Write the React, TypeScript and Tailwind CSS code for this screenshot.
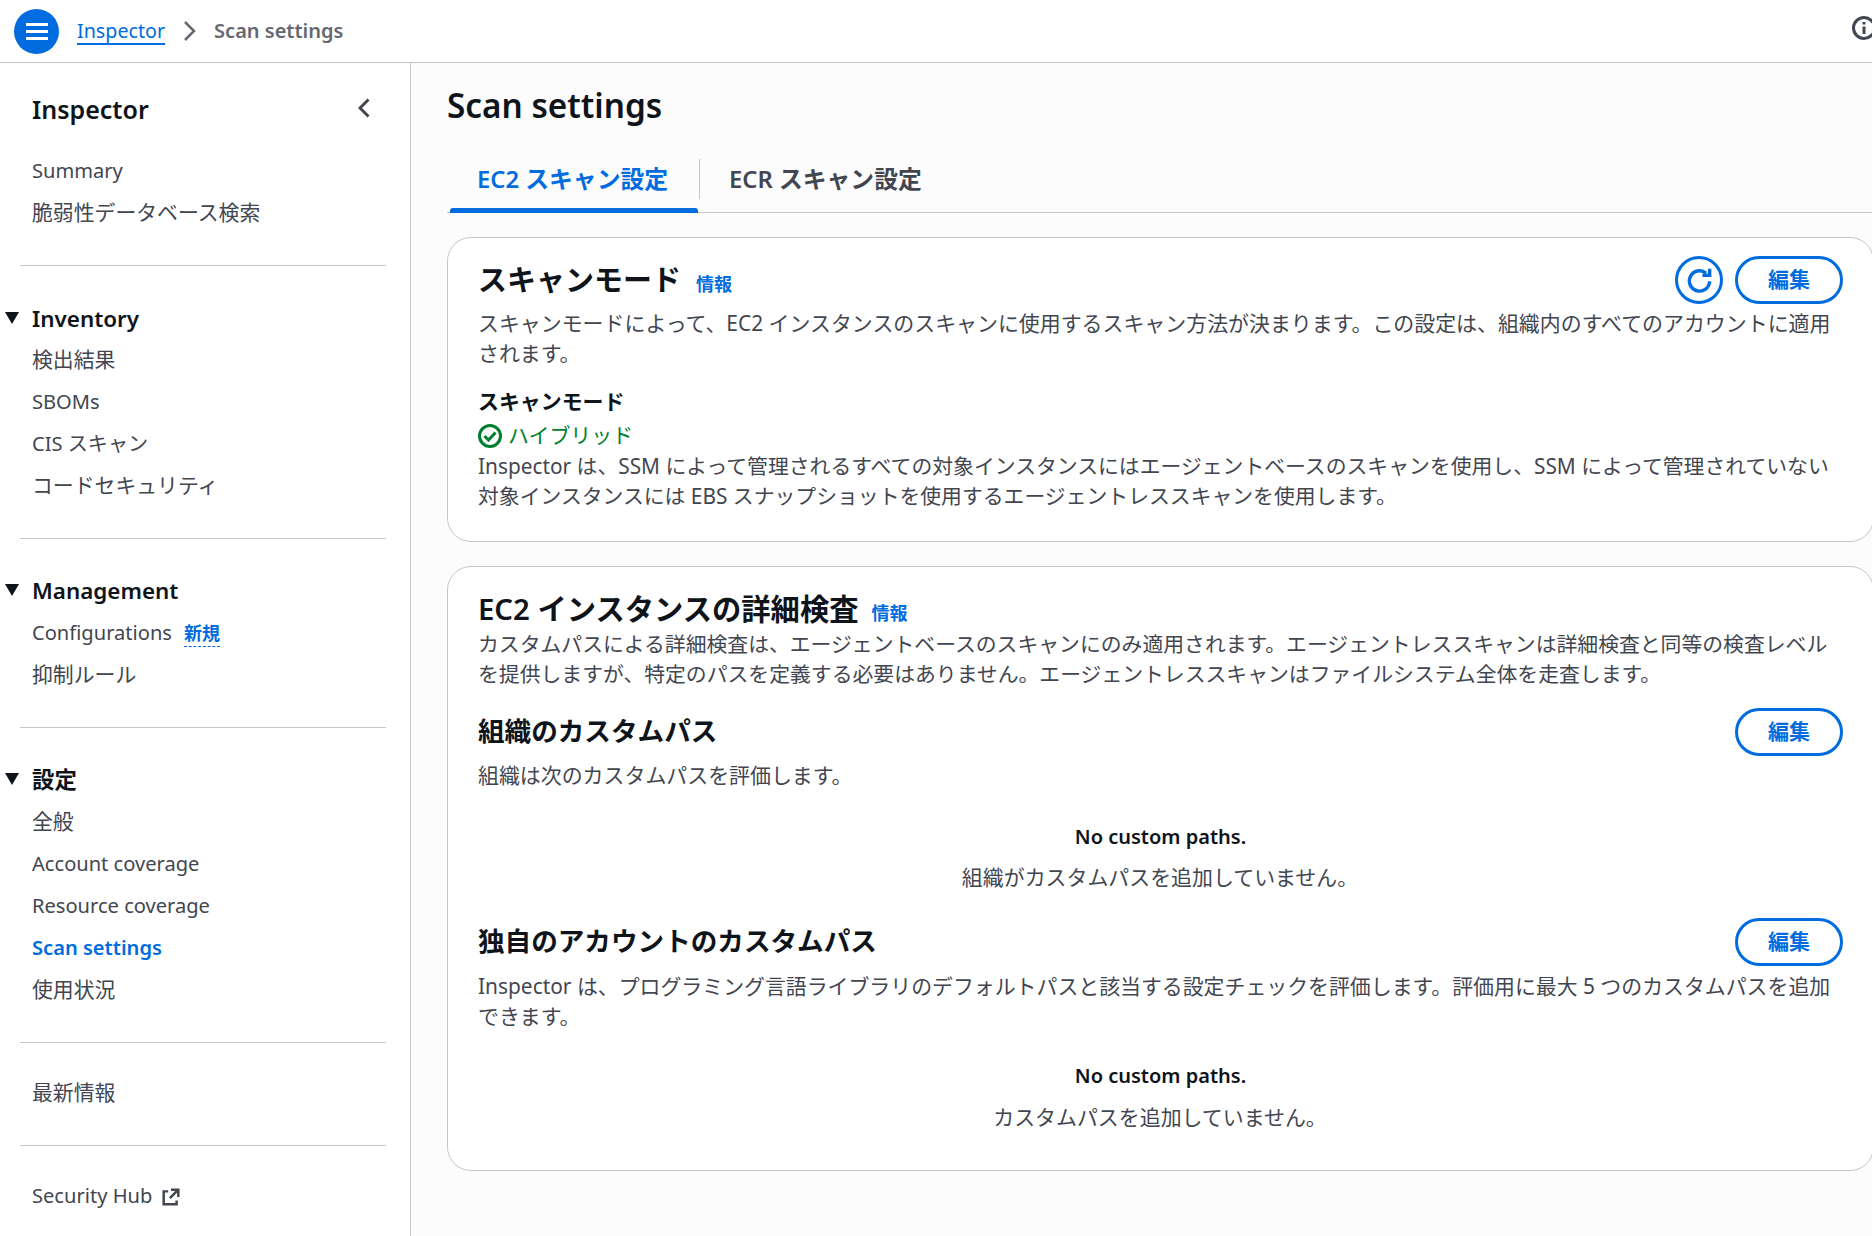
const FONT = "font-['Noto_Sans','Noto_Sans_CJK_JP',sans-serif]";

function Tri() {
  return (
    <svg viewBox="0 0 14 12" className="absolute left-[5px] top-[13px] w-[14px] h-[12px]">
      <path d="M0 0h14L7 12z" fill="#0f141a" />
    </svg>
  );
}

function NavItem({ children, active, latin, className = "" }: { children: React.ReactNode; active?: boolean; latin?: boolean; className?: string }) {
  return (
    <div className={`h-[42px] flex items-center pl-8 ${latin ? "text-[20.1px] pt-[1px]" : "text-[20.85px]"} ${active ? "text-[#006ce0] font-semibold" : "text-[#424650]"} ${className}`}>
      {children}
    </div>
  );
}

function NavHead({ children }: { children: React.ReactNode }) {
  return (
    <div className="relative h-[41px] flex items-center pl-8 pb-[2px] text-[22.4px] font-semibold text-[#0f141a]">
      <Tri />
      {children}
    </div>
  );
}

function Divider({ className = "" }: { className?: string }) {
  return <div className={`h-px ml-5 w-[366px] bg-[#c6c6cd] ${className}`} />;
}

function Sidebar() {
  return (
    <aside className="w-[411px] shrink-0 bg-white border-r border-[#c6c6cd] h-full">
      <div className="flex items-center justify-between pl-8 pr-[40px] h-[30px] mt-[32px]">
        <span className="text-[25px] font-semibold text-[#0f141a]">Inspector</span>
        <svg viewBox="0 0 12 20" className="w-[12px] h-[20px] -mt-[4px]" fill="none" stroke="#424650" strokeWidth="3">
          <path d="M10.5 1.5 2 10l8.5 8.5" />
        </svg>
      </div>
      <div className="mt-[25px]">
        <NavItem latin>Summary</NavItem>
        <NavItem>脆弱性データベース検索</NavItem>
      </div>
      <Divider className="mt-[31px] mb-[33px]" />
      <NavHead>Inventory</NavHead>
      <NavItem className="-mt-[1px]">検出結果</NavItem>
      <NavItem latin>SBOMs</NavItem>
      <NavItem latin>CIS スキャン</NavItem>
      <NavItem>コードセキュリティ</NavItem>
      <Divider className="mt-[31px] mb-[32px]" />
      <NavHead>Management</NavHead>
      <NavItem latin>
        Configurations
        <span className="ml-[12px] text-[18px] font-semibold text-[#006ce0] border-b border-dashed border-[#006ce0] leading-[26px]">新規</span>
      </NavItem>
      <NavItem>抑制ルール</NavItem>
      <Divider className="mt-[31px] mb-[32px]" />
      <NavHead>設定</NavHead>
      <NavItem>全般</NavItem>
      <NavItem latin>Account coverage</NavItem>
      <NavItem latin>Resource coverage</NavItem>
      <NavItem latin active>Scan settings</NavItem>
      <NavItem>使用状況</NavItem>
      <Divider className="mt-[31px] mb-[29px]" />
      <NavItem>最新情報</NavItem>
      <Divider className="mt-[31px] mb-[29px]" />
      <NavItem latin>
        Security Hub
        <svg viewBox="0 0 16 16" className="ml-[10px] w-[18px] h-[18px]" fill="none" stroke="#424650" strokeWidth="2.2">
          <path d="M14.5 8V1.5H8M14.5 1.5 7 9M5.5 3H1.5v11.5H13v-3.5" />
        </svg>
      </NavItem>
    </aside>
  );
}

function EditButton() {
  return (
    <button className="w-[108px] h-[48px] rounded-full border-[3px] border-[#006ce0] bg-white text-[#006ce0] text-[21px] font-semibold flex items-center justify-center">
      編集
    </button>
  );
}

function Empty({ sub, gapClass }: { sub: string; gapClass: string }) {
  return (
    <div className="text-center">
      <div className="leading-[30px] font-semibold text-[20px] text-[#0f141a]">No custom paths.</div>
      <div className={`leading-[30px] text-[#424650] -ml-[1px] ${gapClass}`}>{sub}</div>
    </div>
  );
}

function App() {
  return (
    <div className={`${FONT} w-[1872px] h-[1236px] overflow-hidden flex flex-col bg-[#fcfcfd] text-[20.93px]`} lang="ja">
      <header className="h-[63px] shrink-0 bg-white border-b border-[#c6c6cd] flex items-center pl-[14px] pr-0 relative">
        <button className="w-[45px] h-[45px] rounded-full bg-[#006ce0] flex items-center justify-center">
          <svg viewBox="0 0 22 17" className="w-[22px] h-[17px]" fill="#fff">
            <path d="M0 0h22v3H0zM0 7h22v3H0zM0 14h22v3H0z" />
          </svg>
        </button>
        <a className="ml-[18px] text-[#006ce0] underline underline-offset-[5px] decoration-2 text-[19.7px]">Inspector</a>
        <svg viewBox="0 0 13 20" className="ml-[18px] w-[13px] h-[20px]" fill="none" stroke="#656871" strokeWidth="2.5">
          <path d="M2 1l9 9-9 9" />
        </svg>
        <span className="ml-[18px] text-[#656871] font-semibold text-[20px]">Scan settings</span>
        <svg viewBox="0 0 24 24" className="absolute left-[1852px] top-[16px] w-[24px] h-[24px]" fill="none" stroke="#424650" strokeWidth="3">
          <circle cx="12" cy="12" r="10.5" />
          <path d="M12 10.5V18M12 6v2.5" />
        </svg>
      </header>
      <div className="flex-1 flex min-h-0">
        <Sidebar />
        <main className="w-[1463px] shrink-0 pl-[36px]">
          <h1 className="text-[33.3px] leading-[44px] mt-[20px] font-semibold text-[#0f141a] whitespace-nowrap">Scan settings</h1>
          <div className="mt-[31px] h-[55px] border-b border-[#c6c6cd] flex">
            <div className="relative w-[253px] h-[55px] flex items-start">
              <div className="ml-[30px] text-[23.8px] leading-[32px] mt-[5px] font-semibold text-[#006ce0] whitespace-nowrap">EC2 スキャン設定</div>
              <div className="absolute left-[3px] bottom-[0px] w-[248px] h-[5px] rounded-t-[3px] bg-[#006ce0]" />
              <div className="absolute left-[252px] top-[1px] w-px h-[40px] bg-[#c6c6cd]" />
            </div>
            <div className="ml-[29px] text-[23.8px] leading-[32px] mt-[5px] font-semibold text-[#424650] whitespace-nowrap">ECR スキャン設定</div>
          </div>

          <section className="mt-[24px] h-[305px] bg-white border border-[#c6c6cd] rounded-[24px] pl-[30px] pr-[30px] pt-[18px]">
            <div className="flex items-center justify-between h-[48px]">
              <h2 className="text-[29px] font-semibold text-[#0f141a] flex items-baseline">
                スキャンモード
                <span className="ml-[15px] text-[18px] font-semibold text-[#006ce0]">情報</span>
              </h2>
              <div className="flex gap-[12px]">
                <button className="w-[48px] h-[48px] rounded-full border-[3px] border-[#006ce0] bg-white flex items-center justify-center">
                  <svg viewBox="0 0 16 16" className="w-[25px] h-[25px]" fill="none" stroke="#006ce0" strokeWidth="2.2">
                    <path d="M14.5 8.5a6.5 6.5 0 1 1-2.3-5.2" />
                    <path d="M14.5 .5V4.6h-4.6" />
                  </svg>
                </button>
                <EditButton />
              </div>
            </div>
            <p className="mt-[4px] leading-[30px] text-[#424650] whitespace-nowrap">
              スキャンモードによって、EC2 インスタンスのスキャンに使用するスキャン方法が決まります。この設定は、組織内のすべてのアカウントに適用
              <br />
              されます。
            </p>
            <div className="mt-[16px] leading-[34px] font-semibold text-[#0f141a]">スキャンモード</div>
            <div className="mt-[1px] flex items-center h-[34px] text-[#00802f]">
              <svg viewBox="0 0 24 24" className="w-[24px] h-[24px] mr-[6px]" fill="none" stroke="#00802f" strokeWidth="3">
                <circle cx="12" cy="12" r="10.5" />
                <path d="M6.5 12l4 4 7-7.5" />
              </svg>
              ハイブリッド
            </div>
            <p className="leading-[30px] text-[20.84px] text-[#424650] whitespace-nowrap -mt-[2px]">
              Inspector は、SSM によって管理されるすべての対象インスタンスにはエージェントベースのスキャンを使用し、SSM によって管理されていない
              <br />
              対象インスタンスには EBS スナップショットを使用するエージェントレススキャンを使用します。
            </p>
          </section>

          <section className="mt-[24px] h-[605px] bg-white border border-[#c6c6cd] rounded-[24px] pl-[30px] pr-[30px] pt-[22px]">
            <h2 className="text-[29.3px] leading-[40px] font-semibold text-[#0f141a] flex items-baseline">
              EC2 インスタンスの詳細検査
              <span className="ml-[13px] text-[18px] font-semibold text-[#006ce0]">情報</span>
            </h2>
            <p className="mt-[-4px] leading-[30px] text-[20.84px] text-[#424650] whitespace-nowrap">
              カスタムパスによる詳細検査は、エージェントベースのスキャンにのみ適用されます。エージェントレススキャンは詳細検査と同等の検査レベル
              <br />
              を提供しますが、特定のパスを定義する必要はありません。エージェントレススキャンはファイルシステム全体を走査します。
            </p>
            <div className="mt-[19px] flex items-center justify-between h-[48px]">
              <h3 className="text-[26.6px] font-semibold text-[#0f141a]">組織のカスタムパス</h3>
              <EditButton />
            </div>
            <p className="mt-[4px] leading-[30px] text-[#424650]">組織は次のカスタムパスを評価します。</p>
            <div className="mt-[32px]">
              <Empty sub="組織がカスタムパスを追加していません。" gapClass="mt-[10px]" />
            </div>
            <div className="mt-[26px] flex items-center justify-between h-[48px]">
              <h3 className="text-[26.6px] font-semibold text-[#0f141a]">独自のアカウントのカスタムパス</h3>
              <EditButton />
            </div>
            <p className="mt-[5px] leading-[30px] text-[20.9px] text-[#424650] whitespace-nowrap">
              Inspector は、プログラミング言語ライブラリのデフォルトパスと該当する設定チェックを評価します。評価用に最大 5 つのカスタムパスを追加
              <br />
              できます。
            </p>
            <div className="mt-[30px]">
              <Empty sub="カスタムパスを追加していません。" gapClass="mt-[11px]" />
            </div>
          </section>
        </main>
      </div>
    </div>
  );
}

export default App;
